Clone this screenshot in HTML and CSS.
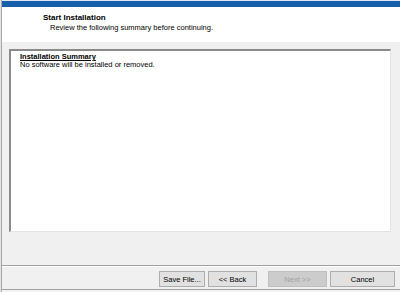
FILE: index.html
```html
<!DOCTYPE html>
<html>
<head>
<meta charset="utf-8">
<link rel="stylesheet" href="styles.css">
</head>
<body>
<div class="win">
  <div class="edge"></div>
  <div class="main">
    <div class="titlebar"></div>
    <div class="header">
      <div class="h-title">Start Installation</div>
      <div class="h-sub">Review the following summary before continuing.</div>
    </div>
    <div class="body">
      <div class="panel">
        <div class="p-title">Installation Summary</div>
        <div class="p-text">No software will be installed or removed.</div>
      </div>
    </div>
    <div class="sep"></div>
    <div class="footer">
      <button class="btn">Save File...</button>
      <button class="btn back">&lt;&lt; Back</button>
      <button class="btn next" disabled>Next &gt;&gt;</button>
      <button class="btn cancel">Cancel</button>
    </div>
    <div class="bottom"></div>
  </div>
</div>
</body>
</html>
```
FILE: styles.css
```css
html, body {
  margin: 0;
  padding: 0;
  width: 400px;
  height: 292px;
  overflow: hidden;
  background: #f0f0f0;
  font-family: "Liberation Sans", Arial, sans-serif;
  font-size: 7.5px;
  color: #000;
}
.win {
  display: flex;
  width: 400px;
  height: 292px;
}
.edge {
  width: 1px;
  background: #e2e2e2;
  border-right: 1px solid #a8a8a8;
}
.main {
  flex: 1;
  display: flex;
  flex-direction: column;
}
.titlebar {
  height: 6px;
  border-top: 1px solid #dfe6ee;
  background: #1660ab;
}
.header {
  height: 35px;
  background: #fff;
  box-sizing: border-box;
  padding: 6px 0 0 41px;
}
.h-title {
  font-weight: bold;
  font-size: 8px;
  line-height: 10px;
}
.h-sub {
  margin-top: 0px;
  padding-left: 7px;
  line-height: 9px;
}
.body {
  height: 224px;
  box-sizing: border-box;
  padding: 7px 9px 0 7px;
}
.panel {
  height: 183px;
  box-sizing: border-box;
  background: #fff;
  border-top: 2px solid #8a8a8a;
  border-left: 2px solid #8a8a8a;
  border-right: 1px solid #e3e3e3;
  border-bottom: 1px solid #e3e3e3;
  padding: 2px 0 0 9px;
}
.p-title {
  font-weight: bold;
  text-decoration: underline;
  line-height: 8px;
}
.p-text {
  line-height: 8px;
}
.sep {
  height: 1px;
  background: #a0a0a0;
  border-bottom: 1px solid #fff;
}
.footer {
  height: 22px;
  box-sizing: border-box;
  display: flex;
  align-items: flex-start;
  padding: 4px 0 0 157px;
}
.btn {
  margin: 0;
  height: 16px;
  padding: 0;
  box-sizing: border-box;
  background: #e1e1e1;
  border: 1px solid #adadad;
  font-family: "Liberation Sans", Arial, sans-serif;
  font-size: 7.5px;
  color: #000;
  width: 46px;
}
.back { width: 49px; margin-left: 3px; }
.next { width: 59px; margin-left: 11px; background: #cccccc; border-color: #bfbfbf; color: #a0a0a0; }
.cancel { width: 65px; margin-left: 3px; }
.bottom {
  height: 2px;
  border-top: 1px solid #a0a0a0;
  background: #f4f4f4;
}
```
